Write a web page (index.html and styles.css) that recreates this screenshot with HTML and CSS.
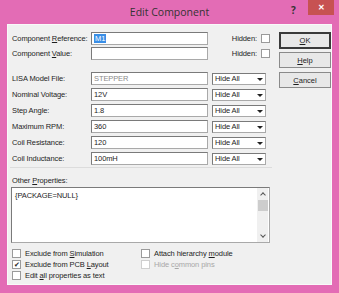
FILE: index.html
```html
<!DOCTYPE html>
<html lang="en">
<head>
<meta charset="UTF-8">
<title>Edit Component</title>
<link rel="stylesheet" href="styles.css">
</head>
<body>
<div class="window">
  <!-- Title bar -->
  <div class="titlebar">
    <span class="title">Edit Component</span>
    <span class="help-q">?</span>
    <span class="close">&#x2715;</span>
  </div>

  <div class="client">
    <div class="main">
      <div class="row">
        <label class="lbl">Component <u>R</u>eference:</label>
        <div class="field"><span class="sel">M1</span></div>
        <span class="hidden-lbl">Hidden:</span>
        <span class="box"></span>
      </div>
      <div class="row row-2">
        <label class="lbl">Component <u>V</u>alue:</label>
        <div class="field"></div>
        <span class="hidden-lbl">Hidden:</span>
        <span class="box"></span>
      </div>

      <div class="props">
        <div class="row">
          <label class="lbl">LISA Model File:</label>
          <div class="field disabled">STEPPER</div>
          <div class="dd">Hide All<span class="arrow"></span></div>
        </div>
        <div class="row">
          <label class="lbl">Nominal Voltage:</label>
          <div class="field">12V</div>
          <div class="dd">Hide All<span class="arrow"></span></div>
        </div>
        <div class="row">
          <label class="lbl">Step Angle:</label>
          <div class="field">1.8</div>
          <div class="dd">Hide All<span class="arrow"></span></div>
        </div>
        <div class="row">
          <label class="lbl">Maximum RPM:</label>
          <div class="field">360</div>
          <div class="dd">Hide All<span class="arrow"></span></div>
        </div>
        <div class="row">
          <label class="lbl">Coil Resistance:</label>
          <div class="field">120</div>
          <div class="dd">Hide All<span class="arrow"></span></div>
        </div>
        <div class="row">
          <label class="lbl">Coil Inductance:</label>
          <div class="field">100mH</div>
          <div class="dd">Hide All<span class="arrow"></span></div>
        </div>
      </div>

      <div class="rule"></div>

      <div class="other-lbl">Other <u>P</u>roperties:</div>
      <div class="textarea">
        <div class="text">{PACKAGE=NULL}</div>
        <div class="scrollbar">
          <span class="sb-up"></span>
          <span class="thumb"></span>
          <span class="sb-down"></span>
        </div>
      </div>

      <!-- Option check boxes -->
      <div class="checks">
        <div class="check-col">
          <div class="check"><span class="box"></span><span>Exclude from <u>S</u>imulation</span></div>
          <div class="check"><span class="box checked">&#x2714;</span><span>Exclude from PCB <u>L</u>ayout</span></div>
          <div class="check"><span class="box"></span><span>Edit <u>a</u>ll properties as text</span></div>
        </div>
        <div class="check-col right">
          <div class="check"><span class="box"></span><span>Attach hierarchy <u>m</u>odule</span></div>
          <div class="check grey"><span class="box"></span><span>Hide c<u>o</u>mmon pins</span></div>
        </div>
      </div>
    </div>

    <div class="vsep"></div>

    <div class="buttons">
      <button class="btn default"><u>O</u>K</button>
      <button class="btn"><u>H</u>elp</button>
      <button class="btn"><u>C</u>ancel</button>
    </div>
  </div>
</div>
</body>
</html>
```

FILE: styles.css
```css
/* Page reset */
body {
  margin: 0;
  font-family: "Liberation Sans", Arial, sans-serif;
  font-size: 7.5px;
  letter-spacing: -0.1px;
  color: #1e1e1e;
}

/* Outer window frame */
.window {
  width: 339px;
  height: 293px;
  box-sizing: border-box;
  background-color: #e36cb5;
  padding: 0 7px 8px 7px;
  display: flex;
  flex-direction: column;
}

/* Title bar */
.titlebar {
  height: 24px;
  position: relative;
  display: flex;
  justify-content: center;
}

.title {
  font-family: "Open Sans", sans-serif;
  font-size: 10.5px;
  letter-spacing: 0;
  color: #333;
  margin-top: 5px;
}

.help-q {
  position: absolute;
  left: 284px;
  top: 3px;
  font-family: "Open Sans", sans-serif;
  font-weight: bold;
  font-size: 10px;
  color: #333;
}

.close {
  position: absolute;
  left: 301px;
  top: 0;
  width: 26px;
  height: 15px;
  background-color: #c75252;
  color: #fff;
  font-size: 8px;
  font-weight: bold;
  display: flex;
  align-items: center;
  justify-content: center;
}

/* Dialog client area */
.client {
  flex: 1;
  background-color: #f0f0f0;
  border: 1px solid #f9f9f9;
  display: flex;
}

.main {
  width: 258px;
  padding: 7px 6px 0 4px;
}

.row {
  display: flex;
  align-items: center;
  height: 13px;
}

.row-2 {
  margin-top: 2px;
}

.lbl {
  width: 79px;
  flex-shrink: 0;
  white-space: nowrap;
}

/* Edit boxes */
.field {
  width: 117px;
  height: 13px;
  box-sizing: border-box;
  background-color: #fff;
  border: 1px solid #a9a9a9;
  border-top-color: #7a7a7a;
  border-left-color: #7a7a7a;
  padding-left: 2px;
  line-height: 11px;
  white-space: nowrap;
}

.field.disabled {
  color: #8a8a8a;
}

.sel {
  background-color: #3a8ee6;
  color: #fff;
  padding: 0 1px;
}

.hidden-lbl {
  margin-left: auto;
}

.box {
  width: 9px;
  height: 9px;
  box-sizing: border-box;
  background-color: #fff;
  border: 1px solid #9a9a9a;
  margin-left: 4px;
  flex-shrink: 0;
  display: inline-flex;
  align-items: center;
  justify-content: center;
  font-size: 7px;
  line-height: 1;
}

.props {
  margin-top: 12px;
  display: flex;
  flex-direction: column;
  gap: 3px;
}

/* Drop down lists */
.dd {
  width: 54px;
  height: 12px;
  box-sizing: border-box;
  margin-left: 4px;
  background-color: #fff;
  border: 1px solid #a9a9a9;
  border-top-color: #7a7a7a;
  border-left-color: #7a7a7a;
  padding-left: 2px;
  line-height: 10px;
  position: relative;
}

.arrow {
  position: absolute;
  right: 2px;
  top: 4px;
  border-left: 3px solid transparent;
  border-right: 3px solid transparent;
  border-top: 3px solid #222;
}

.rule {
  height: 1px;
  background-color: #dcdcdc;
  margin: 2px -2px 0 -2px;
}

.other-lbl {
  margin-top: 8px;
  height: 10px;
  line-height: 10px;
}

/* Other properties memo */
.textarea {
  height: 56px;
  box-sizing: border-box;
  margin-top: 1px;
  margin-left: -1px;
  background-color: #fff;
  border: 1px solid #a9a9a9;
  border-top-color: #7a7a7a;
  border-left-color: #7a7a7a;
  display: flex;
}

.text {
  flex: 1;
  padding: 3px 0 0 3px;
}

.scrollbar {
  width: 11px;
  margin-right: 1px;
  background-color: #f0f0f0;
  display: flex;
  flex-direction: column;
  align-items: center;
}

.sb-up,
.sb-down {
  width: 3px;
  height: 3px;
  border-left: 1px solid #555;
  border-top: 1px solid #555;
  transform: rotate(45deg);
  margin-top: 5px;
}

.sb-down {
  transform: rotate(225deg);
  margin-top: auto;
  margin-bottom: 5px;
}

.thumb {
  width: 10px;
  height: 11px;
  background-color: #cdcdcd;
  margin-top: 3px;
}

/* Check boxes */
.checks {
  display: flex;
  margin-top: 5px;
}

.check-col {
  width: 136px;
}

.check {
  display: flex;
  align-items: center;
  height: 11px;
  white-space: nowrap;
}

.check .box {
  margin: 0 4px 0 0;
}

.check.grey {
  color: #a8a8a8;
}

.check.grey .box {
  border-color: #cfcfcf;
}

/* Vertical divider */
.vsep {
  width: 1px;
  background-color: #3c3c3c;
  margin: 3px 0 2px 0;
}

/* Command buttons */
.buttons {
  padding: 7px 0 0 3px;
  display: flex;
  flex-direction: column;
  gap: 4px;
}

.btn {
  width: 52px;
  height: 16px;
  padding: 0;
  font-family: "Liberation Sans", Arial, sans-serif;
  font-size: 7.5px;
  color: #1e1e1e;
  background-color: #e8e8e8;
  border: 1px solid #8a8a8a;
}

.btn.default {
  height: 17px;
  border: 2px solid #3a3a3a;
  margin-bottom: -1px;
}
```
